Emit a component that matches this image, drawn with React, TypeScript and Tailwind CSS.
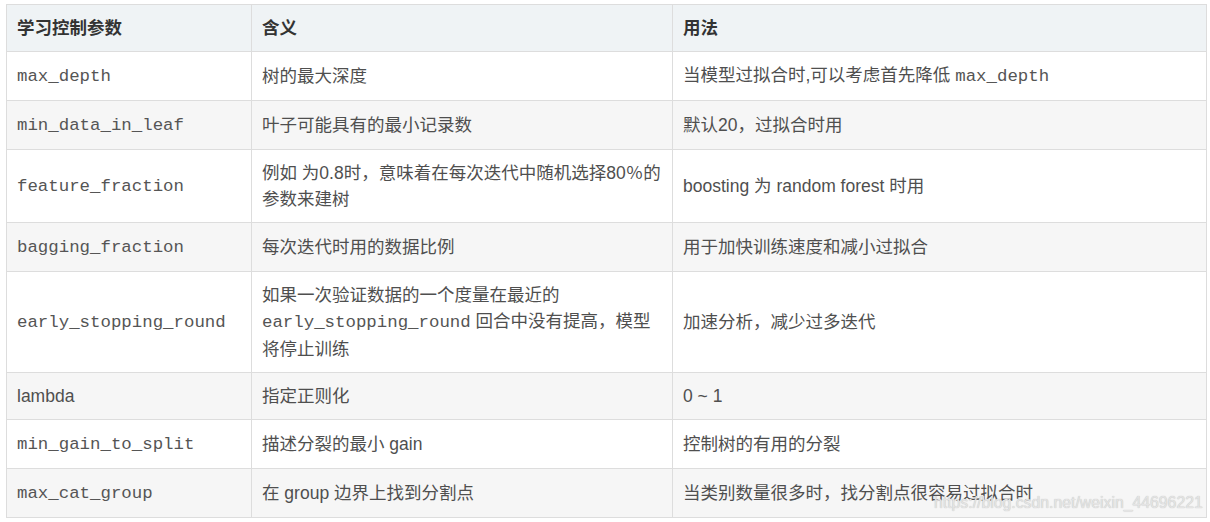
import React from "react";

const cn = '"Liberation Sans", "Noto Sans CJK SC", sans-serif';
const mono = '"Liberation Mono", "Noto Sans CJK SC", monospace';

type Cell = React.ReactNode;

const M = ({ children }: { children: React.ReactNode }) => (
  <code style={{ fontFamily: mono }} className="text-[17.4px] text-[#555555]">{children}</code>
);

const rows: [Cell, Cell, Cell][] = [
  [<M>max_depth</M>, "树的最大深度", <>当模型过拟合时,可以考虑首先降低 <M>max_depth</M></>],
  [<M>min_data_in_leaf</M>, "叶子可能具有的最小记录数", "默认20，过拟合时用"],
  [<M>feature_fraction</M>, <>例如 为0.8时，意味着在每次迭代中随机选择80％的<br />参数来建树</>, "boosting 为 random forest 时用"],
  [<M>bagging_fraction</M>, "每次迭代时用的数据比例", "用于加快训练速度和减小过拟合"],
  [<M>early_stopping_round</M>, <>如果一次验证数据的一个度量在最近的<br /><M>early_stopping_round</M> 回合中没有提高，模型<br />将停止训练</>, "加速分析，减少过多迭代"],
  ["lambda", "指定正则化", "0 ~ 1"],
  [<M>min_gain_to_split</M>, "描述分裂的最小 gain", "控制树的有用的分裂"],
  [<M>max_cat_group</M>, "在 group 边界上找到分割点", "当类别数量很多时，找分割点很容易过拟合时"],
];

export default function App() {
  return (
    <div className="relative w-[1210px] h-[522px] bg-white pl-[6px] pt-[4px]" style={{ fontFamily: cn }}>
      <table className="w-[1201px] border-collapse table-fixed text-[17.5px] leading-[26px] text-[#4f4f4f]">
        <colgroup>
          <col className="w-[245px]" />
          <col className="w-[421px]" />
          <col />
        </colgroup>
        <thead>
          <tr className="bg-[#eff3f5]">
            {["学习控制参数", "含义", "用法"].map((h) => (
              <th key={h} className="border border-[#dddddd] px-[10px] py-[10px] text-left font-bold text-[#333333]">
                {h}
              </th>
            ))}
          </tr>
        </thead>
        <tbody>
          {rows.map((r, i) => (
            <tr key={i} className={i % 2 === 1 ? "bg-[#f6f6f6]" : "bg-white"}>
              {r.map((c, j) => (
                <td key={j} className="border border-[#dddddd] px-[10px] py-[10px] align-middle">
                  {c}
                </td>
              ))}
            </tr>
          ))}
        </tbody>
      </table>
      <div
        className="absolute left-[934px] top-[492px] text-[15.8px] leading-[22px] text-[#e4e4e4] whitespace-nowrap pointer-events-none"
        style={{ fontFamily: '"Liberation Sans", sans-serif', textShadow: "0 0 1px #b5b5b5" }}
      >
        https://blog.csdn.net/weixin_44696221
      </div>
    </div>
  );
}
